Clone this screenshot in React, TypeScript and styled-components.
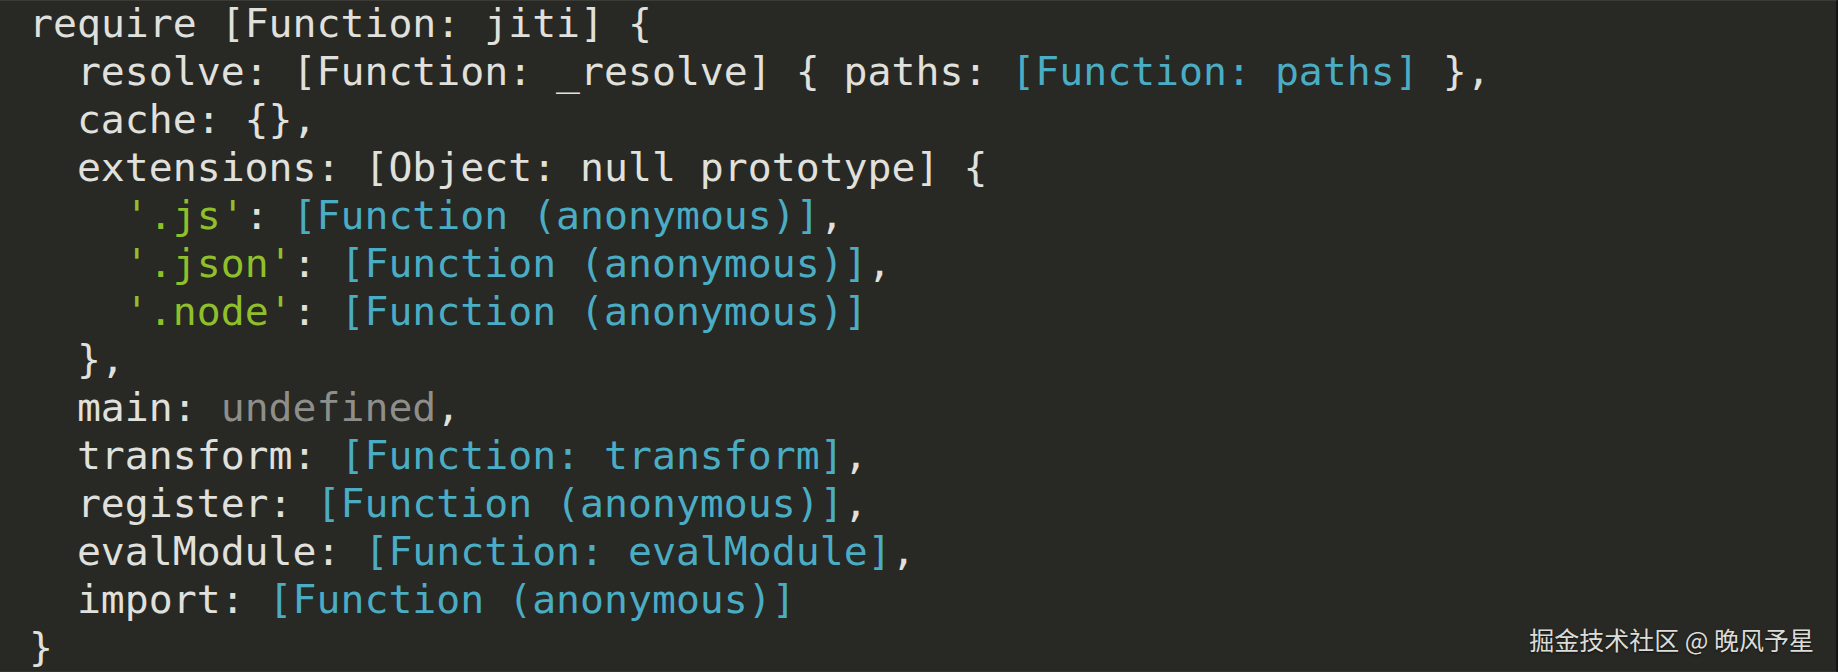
import React from "react";
import styled, { createGlobalStyle } from "styled-components";

const GlobalStyle = createGlobalStyle`
  html, body {
    margin: 0;
    padding: 0;
    background: #282824;
  }
  #root {
    width: 1838px;
    height: 672px;
  }
`;

const Panel = styled.div`
  position: relative;
  box-sizing: border-box;
  width: 1838px;
  height: 672px;
  overflow: hidden;
  background: #282824;
  border-top: 1px solid #3a3a36;
  border-bottom: 1px solid #34342f;
  border-right: 2px solid #141412;
`;

const Code = styled.pre`
  margin: -2px 0 0 0;
  padding: 0 0 0 29px;
  font-family: "DejaVu Sans Mono", "Liberation Mono", monospace;
  font-size: 39.8px;
  line-height: 48px;
  color: #e2e2de;
  white-space: pre;
`;

const Line = styled.div<{ $indent: number }>`
  display: block;
  height: 48px;
  padding-left: ${(p) => p.$indent * 23.96}px;
`;

type Kind = "plain" | "fn" | "str" | "undef";

const colors: Record<Kind, string> = {
  plain: "#e0e0dc",
  fn: "#4badc4",
  str: "#8fbf2a",
  undef: "#8e8e8a",
};

const Token = styled.span<{ $kind: Kind }>`
  color: ${(p) => colors[p.$kind]};
`;

const Watermark = styled.div`
  position: absolute;
  right: 22px;
  bottom: 17px;
  font-family: "Noto Sans CJK SC", "Noto Sans", sans-serif;
  font-size: 25px;
  line-height: 30px;
  color: #dcdcd8;
  text-shadow: 0 1px 2px rgba(0, 0, 0, 0.6);
  white-space: nowrap;
`;

type Seg = [Kind, string];
const lines: { indent: number; segs: Seg[] }[] = [
  { indent: 0, segs: [["plain", "require [Function: jiti] {"]] },
  {
    indent: 1,
    segs: [
      ["plain", "resolve: [Function: _resolve] { paths: "],
      ["fn", "[Function: paths]"],
      ["plain", " },"],
    ],
  },
  { indent: 1, segs: [["plain", "cache: {},"]] },
  { indent: 1, segs: [["plain", "extensions: [Object: null prototype] {"]] },
  {
    indent: 2,
    segs: [
      ["str", "'.js'"],
      ["plain", ": "],
      ["fn", "[Function (anonymous)]"],
      ["plain", ","],
    ],
  },
  {
    indent: 2,
    segs: [
      ["str", "'.json'"],
      ["plain", ": "],
      ["fn", "[Function (anonymous)]"],
      ["plain", ","],
    ],
  },
  {
    indent: 2,
    segs: [
      ["str", "'.node'"],
      ["plain", ": "],
      ["fn", "[Function (anonymous)]"],
    ],
  },
  { indent: 1, segs: [["plain", "},"]] },
  {
    indent: 1,
    segs: [
      ["plain", "main: "],
      ["undef", "undefined"],
      ["plain", ","],
    ],
  },
  {
    indent: 1,
    segs: [
      ["plain", "transform: "],
      ["fn", "[Function: transform]"],
      ["plain", ","],
    ],
  },
  {
    indent: 1,
    segs: [
      ["plain", "register: "],
      ["fn", "[Function (anonymous)]"],
      ["plain", ","],
    ],
  },
  {
    indent: 1,
    segs: [
      ["plain", "evalModule: "],
      ["fn", "[Function: evalModule]"],
      ["plain", ","],
    ],
  },
  {
    indent: 1,
    segs: [
      ["plain", "import: "],
      ["fn", "[Function (anonymous)]"],
    ],
  },
  { indent: 0, segs: [["plain", "}"]] },
];

export default function App() {
  return (
    <>
      <GlobalStyle />
      <Panel>
        <Code>
          {lines.map((l, i) => (
            <Line key={i} $indent={l.indent * 2}>
              {l.segs.map(([k, t], j) => (
                <Token key={j} $kind={k}>
                  {t}
                </Token>
              ))}
            </Line>
          ))}
        </Code>
        <Watermark>掘金技术社区 @ 晚风予星</Watermark>
      </Panel>
    </>
  );
}
